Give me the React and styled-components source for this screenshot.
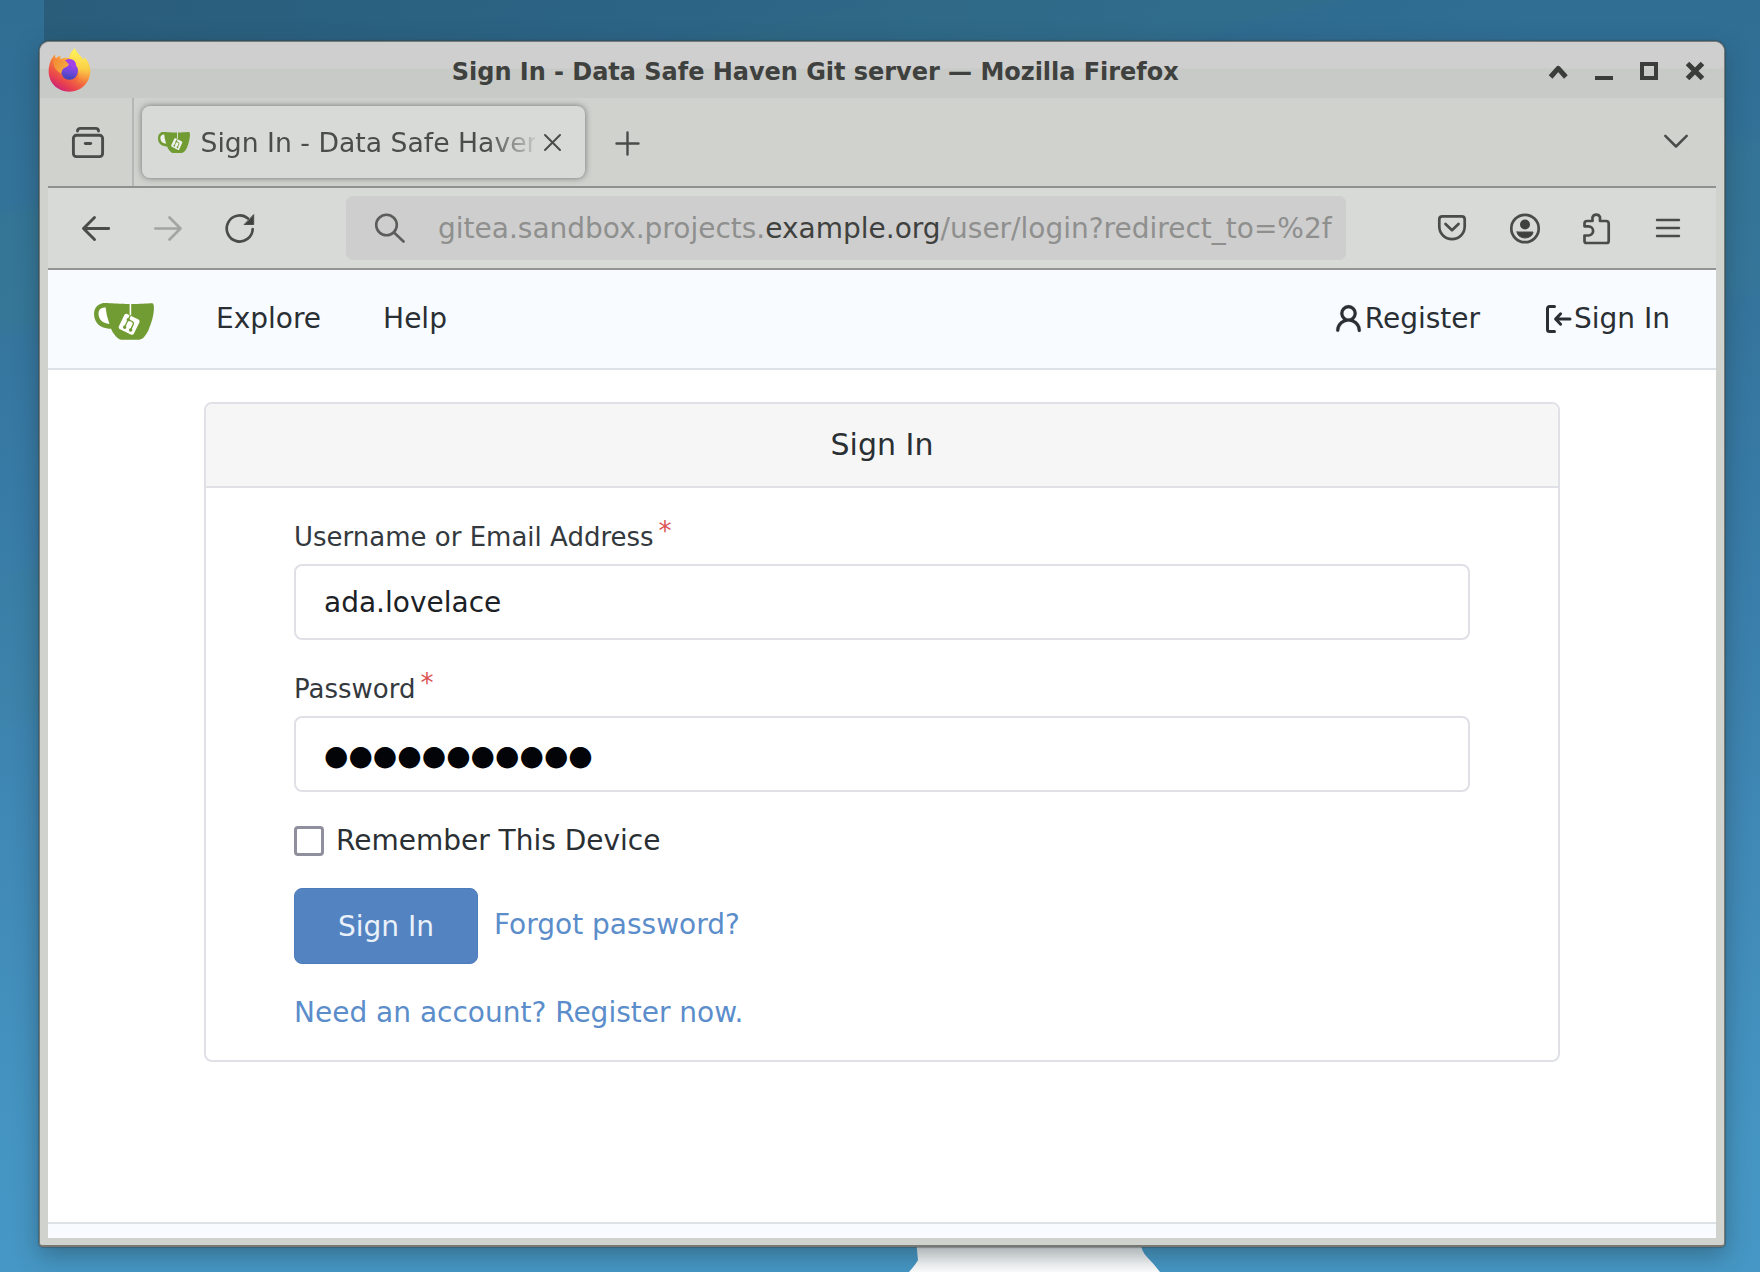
import React from 'react';
import styled, { createGlobalStyle } from 'styled-components';

const Global = createGlobalStyle`
  *, *::before, *::after { box-sizing: border-box; }
  html, body { margin: 0; height: 100%; overflow: hidden; }
  body, input, button { font-family: "DejaVu Sans", sans-serif; }
`;

/* ---------- desktop ---------- */
const Desktop = styled.div`
  position: relative;
  width: 1760px;
  height: 1272px;
  padding: 41px 35px 25px 39px;
  overflow: hidden;
  background:
    linear-gradient(90deg, rgba(40, 90, 118, 0.85), rgba(43, 96, 127, 0) 1500px) 44px 0 / 1716px 41px no-repeat,
    linear-gradient(166deg, transparent 0 12%, rgba(60, 130, 120, 0.14) 13% 19%, transparent 20% 33%,
      rgba(60, 130, 130, 0.12) 34% 42%, transparent 43%),
    linear-gradient(180deg, #306e94 0%, #35759d 25%, #387ca8 42%, #4088b5 65%, #4595c3 90%, #4697c5 100%);
`;

const Mouse = styled.svg`
  position: absolute;
  left: 900px;
  top: 1240px;
`;

/* ---------- window frame ---------- */
const Window = styled.section`
  position: relative;
  display: flex;
  flex-direction: column;
  height: 1206px;
  width: 1686px;
  border: 1px solid #777b78;
  border-bottom: 2px solid #777873;
  border-radius: 10px 10px 4px 4px;
  background: #d0d2ce;
  box-shadow: 0 0 1px 1px rgba(60, 65, 65, 0.4), 0 8px 24px rgba(30, 55, 65, 0.42);
`;

const TitleBar = styled.header`
  display: flex;
  align-items: center;
  flex: none;
  height: 56px;
  padding: 0 20.5px 0 8px;
  border-radius: 9px 9px 0 0;
  background: linear-gradient(180deg, #cfcfcf 0 26px, #c8cac7 27px 100%);
`;

const WindowTitle = styled.h1`
  flex: 1;
  margin: 0 0 0 4px;
  padding: 4px 13px 0 0;
  text-align: center;
  font-size: 24px;
  font-weight: 700;
  line-height: 30px;
  letter-spacing: -0.03px;
  white-space: nowrap;
  color: #3f413e;
`;

const WindowControls = styled.div`
  display: flex;
  align-items: center;
  gap: 27.5px;
  padding-top: 2px;
`;

const TabStrip = styled.nav`
  display: flex;
  flex: none;
  height: 90px;
  margin: 0 8px;
  border-bottom: 2px solid #8f918e;
`;

const ViewButton = styled.div`
  width: 86px;
  padding: 28px 0 0 24px;
  border-right: 2px solid #b5b7b4;
`;

const Tab = styled.div`
  display: flex;
  align-items: center;
  width: 443px;
  height: 72px;
  margin: 8px 0 0 7.5px;
  padding: 0 24px 0 16px;
  border-radius: 8px;
  background: #d8dad7;
  box-shadow: 0 0 6px rgba(70, 72, 70, 0.7);
`;

const TabLabel = styled.span`
  flex: none;
  width: 334px;
  margin: 1px 9px 0 11px;
  overflow: hidden;
  white-space: nowrap;
  font-size: 26.67px;
  line-height: 36px;
  color: #4b4d4b;
  mask-image: linear-gradient(90deg, #000 285px, transparent 342px);
`;

const NewTab = styled.div`
  flex: 1;
  padding: 33px 0 0 30px;
`;

const TabMenu = styled.div`
  padding: 36px 28px 0 0;
`;

const Toolbar = styled.div`
  display: flex;
  align-items: center;
  flex: none;
  height: 82px;
  margin: 0 8px;
  padding: 0 36px 1px 34px;
  background: #d8dad7;
  border-bottom: 2px solid #939593;
`;

const NavButtons = styled.div`
  display: flex;
  align-items: center;
  gap: 43.5px;
  width: 264px;
  flex: none;
`;

const AddressBar = styled.div`
  display: flex;
  align-items: center;
  width: 1000px;
  height: 64px;
  margin-top: 1px;
  padding-left: 29px;
  gap: 33px;
  border-radius: 7px;
  background: #cecece;
  flex: none;
`;

const Url = styled.span`
  padding-top: 2px;
  font-size: 28px;
  line-height: 36px;
  white-space: nowrap;
  color: #8f908e;
  strong { font-weight: 400; color: #3f413f; }
`;

const ToolButtons = styled.div`
  display: flex;
  align-items: center;
  flex: 1;
  justify-content: space-between;
  padding-left: 92px;
`;

/* ---------- page ---------- */
const Page = styled.main`
  display: flex;
  flex-direction: column;
  flex: 1;
  margin: 0 8px 7px;
  background: #fff;
  color: #2a2f34;
`;

const SiteNav = styled.nav`
  display: flex;
  align-items: center;
  height: 100px;
  flex: none;
  padding: 0 46px 0 46px;
  background: #f8fbff;
  border-bottom: 2px solid #dde2e8;
`;

const Brand = styled.a`
  display: block;
  padding-top: 4px;
`;

const NavLink = styled.a`
  display: flex;
  align-items: center;
  margin-left: ${(p) => p.$gap}px;
  font-size: 28px;
  line-height: 34px;
  color: #2a2f34;
`;

const Spacer = styled.div`
  flex: 1;
`;

const Card = styled.form`
  width: 1356px;
  height: 660px;
  margin: 32px auto 0;
  border: 2px solid #dfe1e7;
  border-radius: 8px;
`;

const CardTitle = styled.h2`
  margin: 0;
  height: 84px;
  line-height: 82px;
  text-align: center;
  font-size: 30px;
  font-weight: 400;
  background: #f6f6f6;
  border-bottom: 2px solid #dfe1e7;
  border-radius: 6px 6px 0 0;
`;

const CardBody = styled.div`
  padding: 0 88px;
`;

const Field = styled.div`
  padding-top: 34px;
`;

const Label = styled.label`
  display: flex;
  height: 30px;
  margin-bottom: 12px;
  font-size: 26px;
  line-height: 30px;
  color: #34393e;
`;

const Required = styled.span`
  margin: -6px 0 0 5px;
  color: #db5252;
`;

const Input = styled.input`
  display: block;
  width: 100%;
  height: 76px;
  padding: ${(p) => (p.$dots ? '2px' : '0')} 28px 0;
  border: 2px solid #dfe1e7;
  border-radius: 8px;
  outline: 0;
  background: #fff;
  font-size: 28px;
  color: ${(p) => (p.$dots ? '#020408' : '#1c2126')};
`;

const CheckRow = styled.label`
  display: flex;
  align-items: center;
  height: 30px;
  margin-top: 34px;
  gap: 12px;
  font-size: 28px;
  line-height: 30px;
`;

const CheckBox = styled.span`
  width: 30px;
  height: 30px;
  border: 3.5px solid #8f8f9d;
  border-radius: 4px;
  background: #fff;
`;

const Actions = styled.div`
  display: flex;
  align-items: center;
  margin-top: 32px;
  gap: 16px;
`;

const Submit = styled.button`
  width: 184px;
  height: 76px;
  padding: 2px 0 0;
  border: 1px solid #4c7cbc;
  border-radius: 8px;
  background: #5383c1;
  color: #eaf1fa;
  font-size: 28px;
  line-height: 34px;
`;

const TextLink = styled.a`
  display: block;
  margin-top: ${(p) => p.$top}px;
  font-size: 28px;
  line-height: 34px;
  color: #5b8dcb;
`;

const Footer = styled.footer`
  height: 16px;
  margin-top: auto;
  background: #f8fbff;
  border-top: 2px solid #dde2e6;
`;

/* ---------- drawings ---------- */
const Svg = styled.svg`
  display: block;
  flex: none;
  fill: none;
  stroke: ${(p) => p.$color || '#4a4c4a'};
  stroke-width: ${(p) => p.$w || 2.7};
  stroke-linecap: ${(p) => p.$cap || 'round'};
  stroke-linejoin: round;
  overflow: visible;
`;

const Plain = styled.svg`
  display: block;
  flex: none;
`;

const Firefox = () => (
  <Plain width="43" height="44" viewBox="0 0 132 132" preserveAspectRatio="none">
    <defs>
      <linearGradient id="fxBody" x1="0.85" y1="0.05" x2="0.25" y2="0.98">
        <stop offset="0" stopColor="#fdf050" />
        <stop offset="0.3" stopColor="#fcbf42" />
        <stop offset="0.56" stopColor="#f4743a" />
        <stop offset="0.82" stopColor="#e83f50" />
        <stop offset="1" stopColor="#c9217a" />
      </linearGradient>
      <linearGradient id="fxFlame" x1="0.5" y1="0" x2="0.45" y2="1">
        <stop offset="0" stopColor="#fff65c" />
        <stop offset="0.55" stopColor="#fbcf47" />
        <stop offset="1" stopColor="#f68243" stopOpacity="0" />
      </linearGradient>
      <linearGradient id="fxGlobe" x1="0.6" y1="0" x2="0.4" y2="1">
        <stop offset="0" stopColor="#a93fe8" />
        <stop offset="0.5" stopColor="#7548de" />
        <stop offset="1" stopColor="#3f45b4" />
      </linearGradient>
      <linearGradient id="fxHead" x1="0" y1="0" x2="1" y2="0.5">
        <stop offset="0" stopColor="#f08a35" />
        <stop offset="1" stopColor="#f6ab3d" />
      </linearGradient>
    </defs>
    <path fill="url(#fxBody)" d="M22 19C21 25 22 28 25 31C30 26 34 24 39 23C37 27 37 31 40 33C48 28 57 29 66 30C66 17 76 8 82 1C87 14 96 20 104 29L108 35C110 32 112 31 113 29C124 40 130 54 130 69C129 104 102 131 66 131C28 131 1 104 2 67C3 50 9 31 22 19Z" />
    <path fill="url(#fxFlame)" d="M66 30C66 17 76 8 82 1C87 14 96 20 104 29L108 35C110 32 112 31 113 29C127 48 129 65 121 88C113 107 96 113 80 110C96 98 98 82 91 67C85 53 70 47 66 30Z" />
    <circle cx="66" cy="69" r="26" fill="url(#fxGlobe)" />
    <path fill="#a042e6" d="M52 38C62 29 80 32 85 45C88 54 84 62 78 65C76 56 68 52 59 54C64 48 60 41 52 38Z" />
    <path fill="url(#fxHead)" d="M16 39C27 30 40 34 45 43C53 43 61 45 64 48C63 55 54 58 48 61C44 65 43 70 40 78C30 68 17 65 16 39Z" />
  </Plain>
);

const Gitea = ({ width, height, tag }) => (
  <Plain width={width} height={height} viewBox="5 144 630 388" preserveAspectRatio="none">
    <path fill={tag} d="m395.9 484.2-126.9-61c-12.5-6-17.9-21.2-11.8-33.8l61-126.9c6-12.5 21.2-17.9 33.8-11.8 17.2 8.3 27.1 13 27.1 13l-.1-109.2 16.7-.1.1 117.1s57.4 24.2 83.1 40.1c3.7 2.3 10.2 6.8 12.9 14.4 2.1 6.1 2 13.1-1 19.3l-61 126.9c-6.2 12.7-21.4 18.1-33.9 12z" />
    <path fill={tag} d="M50 180h110l20 195-90-20-50-80z" />
    <path fill="#709c33" d="M622.7 149.8c-4.1-4.1-9.6-4-9.6-4s-117.2 6.6-177.9 8c-13.3.3-26.5.6-39.6.7v117.2c-5.5-2.6-11.1-5.3-16.6-7.9 0-36.4-.1-109.2-.1-109.2-29 .4-89.2-2.2-89.2-2.2s-141.4-7.1-156.8-8.5c-9.8-.6-22.5-2.1-39 1.5-8.7 1.8-33.5 7.4-53.8 26.9C-4.9 212.4 6.6 276.2 8 285.8c1.7 11.7 6.9 44.2 31.7 72.5 45.8 56.1 144.4 54.8 144.4 54.8s12.1 28.9 30.6 55.5c25 33.1 50.7 58.9 75.7 62 63 0 188.9-.1 188.9-.1s12 .1 28.3-10.3c14-8.5 26.5-23.4 26.5-23.4S547 483 565 451.5c5.5-9.7 10.1-19.1 14.1-28 0 0 55.2-117.1 55.2-231.1-1.1-34.5-9.6-40.6-11.6-42.6zM125.6 353.9c-25.9-8.5-36.9-18.7-36.9-18.7S69.6 321.8 60 295.4c-16.5-44.2-1.4-71.2-1.4-71.2s8.4-22.5 38.5-30c13.8-3.7 31-3.1 31-3.1s7.1 59.4 15.7 94.2c7.2 29.2 24.8 77.7 24.8 77.7s-26.1-3.1-43-9.1zm300.3 107.6s-6.1 14.5-19.6 15.4c-5.8.4-10.3-1.2-10.3-1.2s-.3-.1-5.3-2.1l-112.9-55s-10.9-5.7-12.8-15.6c-2.2-8.1 2.7-18.1 2.7-18.1L322 273s4.8-9.7 12.2-13c.6-.3 2.3-1 4.5-1.5 8.1-2.1 18 2.8 18 2.8L467.4 315s12.6 5.7 15.3 16.2c1.9 7.4-.5 14-1.8 17.2-6.3 15.4-55 113.1-55 113.1z" />
    <path fill="#709c33" d="M326.8 380.1c-8.2.1-15.4 5.8-17.3 13.8s2 16.3 9.1 20c7.7 4 17.5 1.8 22.7-5.4 5.1-7.1 4.3-16.9-1.8-23.1l24-49.1c1.5.1 3.7.2 6.2-.5 4.1-.9 7.1-3.6 7.1-3.6 4.2 1.8 8.6 3.8 13.2 6.1 4.8 2.4 9.3 4.9 13.4 7.3.9.5 1.8 1.1 2.8 1.9 1.6 1.3 3.4 3.1 4.7 5.5 1.9 5.5-1.9 14.9-1.9 14.9-2.3 7.6-18.4 40.6-18.4 40.6-8.1-.2-15.3 5-17.7 12.5-2.6 8.1 1.1 17.3 8.9 21.3s17.4 1.7 22.5-5.3c5-6.8 4.6-16.3-1.1-22.6 1.9-3.7 3.7-7.4 5.6-11.3 5-10.4 13.5-30.4 13.5-30.4.9-1.7 5.7-10.3 2.7-21.3-2.5-11.4-12.6-16.7-12.6-16.7-12.2-7.9-29.2-15.2-29.2-15.2s0-4.1-1.1-7.1c-1.1-3.1-2.8-5.1-3.9-6.3 4.7-9.7 9.4-19.3 14.1-29-4.1-2-8.1-4-12.2-6.1-4.8 9.8-9.7 19.7-14.5 29.5-6.7-.1-12.9 3.5-16.1 9.4-3.4 6.3-2.7 14.1 1.9 19.8-8.2 16.8-16.4 33.5-24.6 50.3z" />
  </Plain>
);

export default function App() {
  return (
    <Desktop>
      <Global />
      <Mouse width="270" height="32">
        <defs>
          <linearGradient id="mouseShade" x1="0" y1="0" x2="0" y2="1">
            <stop offset="0.2" stopColor="#f0f0f0" />
            <stop offset="1" stopColor="#ffffff" />
          </linearGradient>
        </defs>
        <path fill="url(#mouseShade)" d="M16 0L18 20Q16 24 9 32H260Q254 24 247 17Q241 11 240 0Z" />
      </Mouse>
      <Window>
        <TitleBar>
          <Firefox />
          <WindowTitle>Sign In - Data Safe Haven Git server — Mozilla Firefox</WindowTitle>
          <WindowControls>
            <Svg width="18.5" height="18" $w={5} $cap="butt" $color="#3b3d3a"><path d="M1.6 15L9.2 6.4L16.9 15" /></Svg>
            <Svg width="18" height="18" $w={4} $cap="butt" $color="#3b3d3a"><path d="M0 16H18" /></Svg>
            <Plain width="18" height="18"><rect x="2" y="2" width="14" height="14" fill="none" stroke="#3b3d3a" strokeWidth="4" /></Plain>
            <Svg width="18" height="18" $w={5} $cap="butt" $color="#3b3d3a"><path d="M1.5 1.5L16.5 16.5M16.5 1.5L1.5 16.5" /></Svg>
          </WindowControls>
        </TitleBar>
        <TabStrip>
          <ViewButton>
            <Svg width="32" height="32" $w={2.9}>
              <path d="M5.5 5Q5.5 2.4 8.5 2.4H23.5Q26.5 2.4 26.5 5" />
              <rect x="1.4" y="9.3" width="29.2" height="21.3" rx="3" />
              <path d="M13.3 17.5H18.7" />
            </Svg>
          </ViewButton>
          <Tab>
            <Gitea width={32} height={21} tag="#eef1ec" />
            <TabLabel>Sign In - Data Safe Haven</TabLabel>
            <Svg width="17" height="17" $w={2}><path d="M1 1L16 16M16 1L1 16" /></Svg>
          </Tab>
          <NewTab>
            <Svg width="25" height="25" $w={2.4}><path d="M12.5 1.5V23.5M1.5 12.5H23.5" /></Svg>
          </NewTab>
          <TabMenu>
            <Svg width="24" height="14" $w={2.5}><path d="M1.3 1.8L12 12.5L22.7 1.8" /></Svg>
          </TabMenu>
        </TabStrip>
        <Toolbar>
          <NavButtons>
            <Svg width="28" height="26" $w={2.9}><path d="M26.7 13.5H1.5M12.5 2.5L1.5 13.5L12.5 24.5" /></Svg>
            <Svg width="28" height="26" $w={2.7} $color="#a3a5a3"><path d="M1.3 13.5H26.5M15.5 2.5L26.5 13.5L15.5 24.5" /></Svg>
            <Svg width="30" height="30" $w={2.7}>
              <path d="M27.7 16A13 13 0 1 1 23 5.5" />
              <path d="M28.7 2V11.5H19.5Z" fill="#3f413f" strokeWidth="1" />
            </Svg>
          </NavButtons>
          <AddressBar>
            <Svg width="30" height="30" $w={2.6} $color="#5c5e5c"><circle cx="11.5" cy="12" r="10.3" /><path d="M19 19.5L28.5 28.5" /></Svg>
            <Url>gitea.sandbox.projects.<strong>example.org</strong>/user/login?redirect_to=%2f</Url>
          </AddressBar>
          <ToolButtons>
            <Svg width="28" height="26">
              <path d="M4.3 1.3H23.7Q26.7 1.3 26.7 4.3V11.5A12.7 12.7 0 0 1 1.3 11.5V4.3Q1.3 1.3 4.3 1.3ZM7.5 9L14 15.2L20.5 9" />
            </Svg>
            <Svg width="30" height="30">
              <circle cx="15" cy="15.5" r="13.7" />
              <circle cx="15" cy="11.5" r="5" fill="#3f413f" stroke="none" />
              <path d="M7 19H23A8 6 0 0 1 7 19Z" fill="#3f413f" strokeWidth="1" />
            </Svg>
            <Svg width="29" height="32">
              <path d="M1.5 13.5V11.5Q1.5 9 4 9H9.5V5.3A4 4 0 0 1 17 5.3V9H23Q25.7 9 25.7 11.5V29Q25.7 31 23.7 31H3.5Q1.5 31 1.5 29V23.5H5.5A4.6 4.6 0 0 0 5.5 14.3H1.5Z" />
            </Svg>
            <Svg width="24" height="20" $w={2.4}><path d="M1 2H23M1 10H23M1 18H23" /></Svg>
          </ToolButtons>
        </Toolbar>
        <Page>
          <SiteNav>
            <Brand><Gitea width={60} height={37} tag="#fff" /></Brand>
            <NavLink $gap={62}>Explore</NavLink>
            <NavLink $gap={62}>Help</NavLink>
            <Spacer />
            <NavLink>
              <Plain width="33" height="33" viewBox="0 0 16 16">
                <path fill="#2a2f34" stroke="#2a2f34" strokeWidth="0.1" d="M10.5 5a2.5 2.5 0 1 1-5 0 2.5 2.5 0 0 1 5 0Zm.061 3.073a4 4 0 1 0-5.123 0 6.004 6.004 0 0 0-3.431 5.142.75.75 0 0 0 1.498.07 4.5 4.5 0 0 1 8.99 0 .75.75 0 1 0 1.498-.07 6.004 6.004 0 0 0-3.432-5.142Z" />
              </Plain>
              Register
            </NavLink>
            <NavLink $gap={62}>
              <Svg width="32" height="32" viewBox="0 0 16 16" $w={1.5} $color="#2a2f34">
                <path d="M6.25 1.75H3.75a1 1 0 0 0-1 1v10.5a1 1 0 0 0 1 1h2.5M14 8H7.2M9.3 5.4L6.8 8l2.5 2.6" />
              </Svg>
              Sign In
            </NavLink>
          </SiteNav>
          <Card onSubmit={(e) => e.preventDefault()}>
            <CardTitle>Sign In</CardTitle>
            <CardBody>
              <Field>
                <Label>Username or Email Address<Required>*</Required></Label>
                <Input defaultValue="ada.lovelace" />
              </Field>
              <Field>
                <Label>Password<Required>*</Required></Label>
                <Input $dots readOnly value="●●●●●●●●●●●" />
              </Field>
              <CheckRow><CheckBox />Remember This Device</CheckRow>
              <Actions>
                <Submit>Sign In</Submit>
                <TextLink $top={-3}>Forgot password?</TextLink>
              </Actions>
              <TextLink $top={32}>Need an account? Register now.</TextLink>
            </CardBody>
          </Card>
          <Footer />
        </Page>
      </Window>
    </Desktop>
  );
}
